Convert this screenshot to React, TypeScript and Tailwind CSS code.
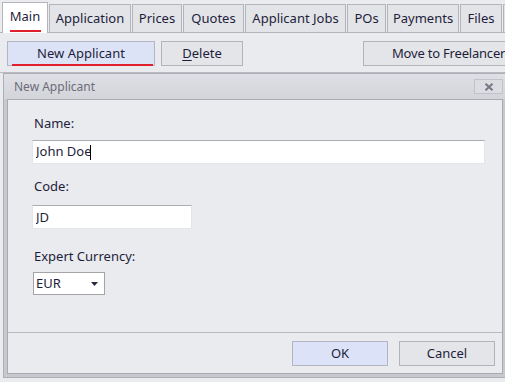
import { useState } from "react"

const tabs = [
  { label: "Main", w: "w-[46px]", active: true },
  { label: "Application", w: "w-[82px]" },
  { label: "Prices", w: "w-[50px]" },
  { label: "Quotes", w: "w-[61px]" },
  { label: "Applicant Jobs", w: "w-[101px]" },
  { label: "POs", w: "w-[39px]" },
  { label: "Payments", w: "w-[72px]" },
  { label: "Files", w: "w-[42px]" },
  { label: "", w: "w-[80px]" },
]

const font = "font-['Segoe_UI','Noto_Sans',sans-serif] text-[13px] text-[#1e1e3c]"

export default function App() {
  const [name, setName] = useState("John Doe")
  const [code, setCode] = useState("JD")

  return (
    <div className={`w-[505px] h-[382px] overflow-hidden bg-[#eaebef] ${font}`}>
      {/* Tab strip */}
      <div className="flex items-end gap-px h-[33px] pl-[2px] border-b border-[#b4b5bb] bg-[#eaebef]">
        {tabs.map((t, i) =>
          t.active ? (
            <div
              key={i}
              className={`relative z-10 ${t.w} shrink-0 h-[31px] -mb-px flex items-center justify-center bg-white border-l border-t border-r border-[#b4b5bb] pb-[2px]`}
            >
              <span>{t.label}</span>
              <span className="absolute bottom-[1px] left-[7px] w-[31px] h-[2px] bg-[#e0202a]" />
            </div>
          ) : (
            <div
              key={i}
              className={`${t.w} shrink-0 h-[28px] flex items-center justify-center bg-[#e3e4e8] border-l border-t border-r border-[#b4b5bb] whitespace-nowrap`}
            >
              {t.label}
            </div>
          )
        )}
      </div>

      {/* Toolbar */}
      <div className="flex items-start h-[40px] pt-[8px] border-b border-[#b9bac0]">
        <button className="relative ml-[7px] w-[148px] h-[25px] shrink-0 bg-[#dce3f7] border border-[#b3b6c2]">
          New Applicant
          <span className="absolute bottom-[-1px] left-[4px] right-[1px] h-[2px] bg-[#e0202a]" />
        </button>
        <button className="ml-[6px] w-[82px] h-[25px] shrink-0 bg-[#e4e5e9] border border-[#b3b4ba]">
          <span className="underline underline-offset-2">D</span>elete
        </button>
        <button className="ml-[120px] w-[150px] h-[25px] shrink-0 bg-[#e4e5e9] border border-[#b3b4ba] text-left pl-[28px] whitespace-nowrap tracking-[-0.2px]">
          Move to Freelancer
        </button>
      </div>

      {/* Dialog */}
      <div className="ml-[3px] w-[504px] shrink-0 border border-[#aeafb6] bg-[#c8c9cf]">
        <div className="h-[25px] flex items-center justify-between pl-[10px] pr-[3px] bg-gradient-to-b from-[#dfe0e5] to-[#d3d4da]">
          <span className="text-[#6b6c78] text-[12px]">New Applicant</span>
          <div className="w-[29px] h-[15px] flex items-center justify-center border border-[#c2c3c9] bg-[#dcdde2]">
            <svg width="10" height="8" viewBox="0 0 10 8">
              <path d="M1.5 0.8 L8.5 7.2 M8.5 0.8 L1.5 7.2" stroke="#777885" strokeWidth="2" />
            </svg>
          </div>
        </div>
        <div className="px-[3px] pb-[3px]">
          <div className="border border-[#a9aab1] bg-[#eaebef]">
            <div className="h-[233px] border-b border-[#b9bac0] pl-[24px] pr-[17px] pt-[14px] flex flex-col">
              <label className="leading-[18px] pl-[2px]">Name:</label>
              <div className="mt-[8px] h-[24px] flex items-center bg-white border border-[#e2e5ea] border-t-[#abadb3] pl-[3px]">
                <input
                  value={name}
                  onChange={(e) => setName(e.target.value)}
                  className="w-[54px] outline-none bg-transparent"
                />
                <span className="w-px h-[15px] bg-black" />
              </div>

              <label className="mt-[13px] leading-[18px] pl-[2px]">Code:</label>
              <input
                value={code}
                onChange={(e) => setCode(e.target.value)}
                className="mt-[10px] w-[160px] h-[24px] bg-white border border-[#e2e5ea] border-t-[#abadb3] pl-[3px] outline-none"
              />

              <label className="mt-[18px] leading-[18px] pl-[2px]">Expert Currency:</label>
              <div className="mt-[7px] w-[72px] h-[23px] ml-px flex items-center justify-between bg-white border border-[#a3a3a8] pl-[2px] pr-[6px]">
                <span>EUR</span>
                <svg width="7" height="4" viewBox="0 0 7 4">
                  <path d="M0 0 H7 L3.5 4 Z" fill="#2a2a3a" />
                </svg>
              </div>
            </div>
            <div className="h-[40px] flex items-start justify-end pt-[8px] pr-[7px] gap-[11px]">
              <button className="w-[96px] h-[25px] bg-[#dce3f8] border border-[#b3b6c2]">OK</button>
              <button className="w-[96px] h-[25px] bg-[#e4e5e9] border border-[#b3b4ba]">Cancel</button>
            </div>
          </div>
        </div>
      </div>
    </div>
  )
}
